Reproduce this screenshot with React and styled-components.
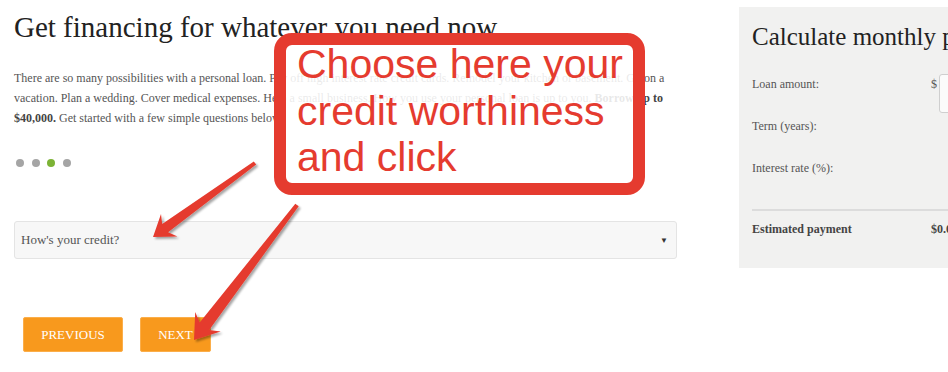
import React from "react";
import styled, { createGlobalStyle } from "styled-components";

const GlobalStyle = createGlobalStyle`
  html, body {
    margin: 0;
    padding: 0;
    background: #fff;
    overflow: hidden;
  }
  body {
    font-family: "Liberation Serif", "Times New Roman", serif;
    color: #555;
  }
`;

const RED = "#e53b2f";

// tapered arrow polygon from tail to tip
const arrowPoints = (tail, tip, headLen, headHalf, neckHalf, tailHalf) => {
  const dx = tip[0] - tail[0];
  const dy = tip[1] - tail[1];
  const len = Math.hypot(dx, dy);
  const ux = dx / len;
  const uy = dy / len;
  const nx = -uy;
  const ny = ux;
  const at = (d, w) => [tip[0] - ux * d + nx * w, tip[1] - uy * d + ny * w];
  const pts = [
    [tail[0] + nx * tailHalf, tail[1] + ny * tailHalf],
    at(headLen * 0.75, neckHalf),
    at(headLen, headHalf),
    tip,
    at(headLen, -headHalf),
    at(headLen * 0.75, -neckHalf),
    [tail[0] - nx * tailHalf, tail[1] - ny * tailHalf],
  ];
  return pts.map((p) => p.map((v) => v.toFixed(1)).join(",")).join(" ");
};

const Page = styled.div`
  position: relative;
  width: 948px;
  height: 372px;
  display: flex;
  align-items: flex-start;
  padding-left: 14px;
  box-sizing: border-box;
  overflow: hidden;
`;

const Main = styled.div`
  width: 663px;
  flex-shrink: 0;
`;

const Title = styled.h1`
  margin: 0;
  padding-top: 10px;
  font-size: 29px;
  line-height: 34px;
  font-weight: normal;
  color: #222;
`;

const Intro = styled.p`
  margin: 24px 0 0;
  font-size: 12px;
  line-height: 20px;
  color: #555;

  strong {
    color: #444;
  }
`;

const Dots = styled.div`
  display: flex;
  gap: 7.5px;
  margin: 31px 0 0 2px;
`;

const Dot = styled.span`
  width: 8px;
  height: 8px;
  border-radius: 50%;
  background: ${(p) => (p.$active ? "#7cb335" : "#a5a5a5")};
`;

const Select = styled.div`
  margin-top: 54px;
  height: 38px;
  box-sizing: border-box;
  display: flex;
  align-items: center;
  justify-content: space-between;
  padding: 0 8px 0 6px;
  background: #f7f7f7;
  border: 1px solid #e4e4e4;
  border-radius: 3px;
  font-size: 13px;
  color: #555;
`;

const Caret = styled.span`
  font-size: 8px;
  color: #333;
`;

const Buttons = styled.div`
  display: flex;
  gap: 17px;
  margin: 58px 0 0 9px;
`;

const Button = styled.button`
  height: 35px;
  width: ${(p) => p.$w}px;
  padding: 0;
  border: 1px solid #fbae4a;
  border-radius: 2px;
  background: #f8991d;
  color: #fff;
  font-family: "Liberation Serif", "Times New Roman", serif;
  font-size: 13px;
  text-transform: uppercase;
`;

const Panel = styled.aside`
  margin: 7px 0 0 62px;
  width: 300px;
  height: 261px;
  flex-shrink: 0;
  background: #f1f1f0;
  padding: 15px 0 0 13px;
  box-sizing: border-box;
`;

const PanelTitle = styled.h2`
  margin: 0;
  font-size: 25px;
  line-height: 30px;
  font-weight: normal;
  color: #222;
  white-space: nowrap;
`;

const Rows = styled.div`
  margin-top: 22px;
`;

const Row = styled.div`
  display: grid;
  grid-template-columns: 179px 1fr;
  height: 42px;
  font-size: 12px;
  line-height: 16px;
`;

const Label = styled.span`
  padding-top: 2px;
  color: #555;
`;

const AmountCell = styled.div`
  display: flex;
  align-items: flex-start;
  gap: 2px;
  padding-top: 2px;
`;

const AmountInput = styled.div`
  width: 80px;
  height: 39px;
  margin-top: -2px;
  box-sizing: border-box;
  background: #fbfbfb;
  border: 1px solid #cfcfcf;
  border-radius: 3px;
`;

const Result = styled.div`
  display: grid;
  grid-template-columns: 179px 1fr;
  margin-top: 9px;
  border-top: 2px solid #dcdcdc;
  padding-top: 10px;
  font-size: 12px;
  line-height: 16px;
  font-weight: bold;
  color: #444;
`;

const Callout = styled.div`
  position: absolute;
  left: 274px;
  top: 33px;
  width: 371px;
  height: 162px;
  box-sizing: border-box;
  border: 12px solid ${RED};
  border-radius: 18px;
  background: rgba(255, 255, 255, 0.88);
  padding-left: 11px;
  font-family: "Liberation Sans", Arial, sans-serif;
  font-size: 41px;
  line-height: 46.5px;
  color: ${RED};
  white-space: nowrap;
`;

const CalloutText = styled.div`
  margin-top: -4px;
`;

const Arrows = styled.svg`
  position: absolute;
  left: 0;
  top: 0;
  pointer-events: none;
`;

export default function App() {
  return (
    <>
      <GlobalStyle />
      <Page>
        <Main>
          <Title>Get financing for whatever you need now</Title>
          <Intro>
            There are so many possibilities with a personal loan. Pay off high
            interest rate credit cards. Remodel your kitchen or basement. Go on a
            vacation. Plan a wedding. Cover medical expenses. Help a small
            business. How you use your personal loan is up to you.{" "}
            <strong>Borrow up to $40,000.</strong> Get started with a few simple
            questions below.
          </Intro>
          <Dots>
            <Dot />
            <Dot />
            <Dot $active />
            <Dot />
          </Dots>
          <Select>
            <span>How's your credit?</span>
            <Caret>▼</Caret>
          </Select>
          <Buttons>
            <Button $w={100}>Previous</Button>
            <Button $w={71}>Next</Button>
          </Buttons>
        </Main>

        <Panel>
          <PanelTitle>Calculate monthly payments</PanelTitle>
          <Rows>
            <Row>
              <Label>Loan amount:</Label>
              <AmountCell>
                <span>$</span>
                <AmountInput />
              </AmountCell>
            </Row>
            <Row>
              <Label>Term (years):</Label>
            </Row>
            <Row>
              <Label>Interest rate (%):</Label>
            </Row>
          </Rows>
          <Result>
            <span>Estimated payment</span>
            <span>$0.00</span>
          </Result>
        </Panel>

        <Callout>
          <CalloutText>
            Choose here your
            <br />
            credit worthiness
            <br />
            and click
          </CalloutText>
        </Callout>

        <Arrows width="948" height="372" viewBox="0 0 948 372">
          <defs>
            <filter id="shadow" x="-20%" y="-20%" width="140%" height="140%">
              <feDropShadow dx="2" dy="2" stdDeviation="1.2" floodColor="#000" floodOpacity="0.35" />
            </filter>
          </defs>
          <g fill={RED} filter="url(#shadow)">
            <polygon points={arrowPoints([255, 163], [153, 237], 20, 14, 5, 2)} />
            <polygon points={arrowPoints([297, 205], [194, 340], 23, 16, 6, 2.2)} />
          </g>
        </Arrows>
      </Page>
    </>
  );
}
